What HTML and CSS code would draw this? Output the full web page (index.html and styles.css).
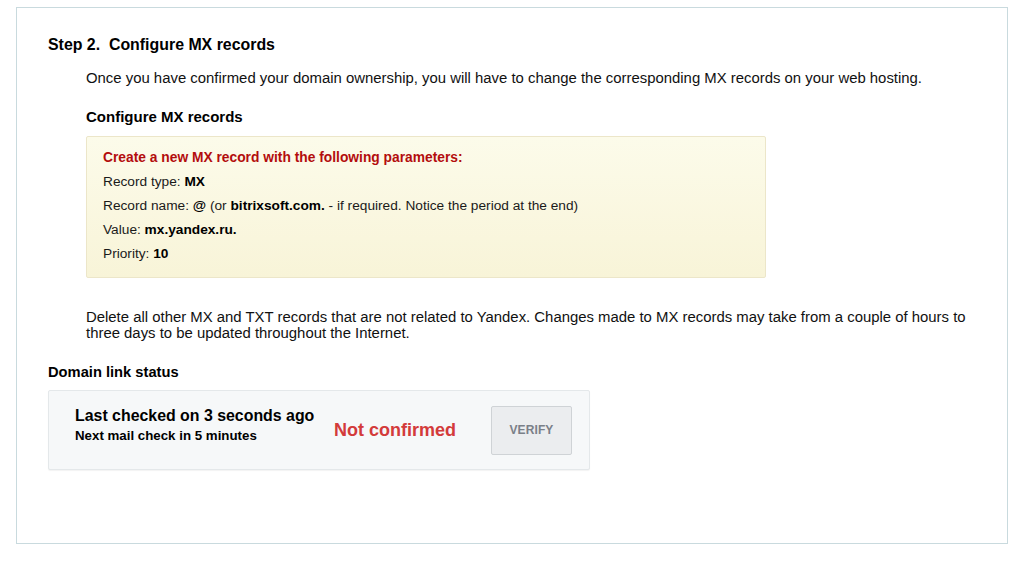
FILE: index.html
```html
<!DOCTYPE html>
<html>
<head>
<meta charset="utf-8">
<link rel="stylesheet" href="styles.css">
</head>
<body>
<div class="panel">
  <h2 class="step-title">Step 2.&nbsp; Configure MX records</h2>
  <div class="indent">
    <p class="text">Once you have confirmed your domain ownership, you will have to change the corresponding MX records on your web hosting.</p>
    <h3 class="sub-title">Configure MX records</h3>
    <div class="note">
      <div class="note-title">Create a new MX record with the following parameters:</div>
      <div class="note-line">Record type: <b>MX</b></div>
      <div class="note-line">Record name: <b>@</b> (or <b>bitrixsoft.com.</b> - if required. Notice the period at the end)</div>
      <div class="note-line">Value: <b>mx.yandex.ru.</b></div>
      <div class="note-line">Priority: <b>10</b></div>
    </div>
    <p class="text text-wide">Delete all other MX and TXT records that are not related to Yandex. Changes made to MX records may take from a couple of hours to three days to be updated throughout the Internet.</p>
  </div>
  <h3 class="status-title">Domain link status</h3>
  <div class="status">
    <div class="status-info">
      <div class="status-main">Last checked on 3 seconds ago</div>
      <div class="status-sub">Next mail check in 5 minutes</div>
    </div>
    <div class="status-state">Not confirmed</div>
    <button class="verify">VERIFY</button>
  </div>
</div>
</body>
</html>
```
FILE: styles.css
```css
html, body {
  margin: 0;
  padding: 0;
  background: #fff;
}
body {
  font-family: "Liberation Sans", Arial, sans-serif;
  color: #000;
  padding: 7px 16px 0 16px;
}
.panel {
  width: 992px;
  height: 537px;
  box-sizing: border-box;
  border: 1px solid #c9dade;
  padding: 27px 0 0 31px;
}
.step-title {
  margin: 0;
  font-size: 15.9px;
  font-weight: bold;
  line-height: 20px;
}
.indent {
  padding-left: 38px;
}
.text {
  margin: 0;
  font-size: 14.9px;
  line-height: 16px;
  color: #111;
}
.indent > .text:first-child {
  margin-top: 15px;
}
.sub-title {
  margin: 23px 0 0;
  font-size: 15px;
  font-weight: bold;
  line-height: 16px;
}
.note {
  margin-top: 11px;
  width: 680px;
  height: 142px;
  box-sizing: border-box;
  border: 1px solid #ece6c9;
  border-radius: 2px;
  background: linear-gradient(#fcfbea, #f8f4d8);
  padding: 13px 16px 0 16px;
  font-size: 13.7px;
}
.note-title {
  color: #b30d0d;
  font-weight: bold;
  line-height: 16px;
  font-size: 13.8px;
}
.note-line {
  line-height: 16px;
  margin-top: 8px;
  color: #1a1a1a;
}
.note-line b {
  color: #000;
}
.text-wide {
  margin-top: 31px;
  width: 900px;
}
.status-title {
  margin: 23px 0 0;
  font-size: 14.7px;
  font-weight: bold;
  line-height: 16px;
}
.status {
  margin-top: 10px;
  width: 542px;
  height: 80px;
  box-sizing: border-box;
  border: 1px solid #e4e8ea;
  border-radius: 2px;
  background: #f6f8f9;
  box-shadow: 0 1px 1px rgba(0,0,0,0.05);
  display: flex;
  align-items: center;
  padding: 0 17px 0 26px;
}
.status-info {
  width: 259px;
  margin-top: -11px;
}
.status-main {
  font-size: 15.9px;
  font-weight: bold;
  line-height: 18px;
}
.status-sub {
  font-size: 13.3px;
  font-weight: bold;
  line-height: 14px;
  margin-top: 4px;
}
.status-state {
  flex: 1;
  color: #d33b3b;
  font-size: 18px;
  font-weight: bold;
  margin-top: 1px;
}
.verify {
  width: 81px;
  height: 49px;
  background: #ebedef;
  border: 1px solid #cfd3d6;
  border-radius: 2px;
  color: #7a8088;
  font-family: "Liberation Sans", Arial, sans-serif;
  font-weight: bold;
  font-size: 12px;
  letter-spacing: 0.1px;
  padding: 0;
}
```
